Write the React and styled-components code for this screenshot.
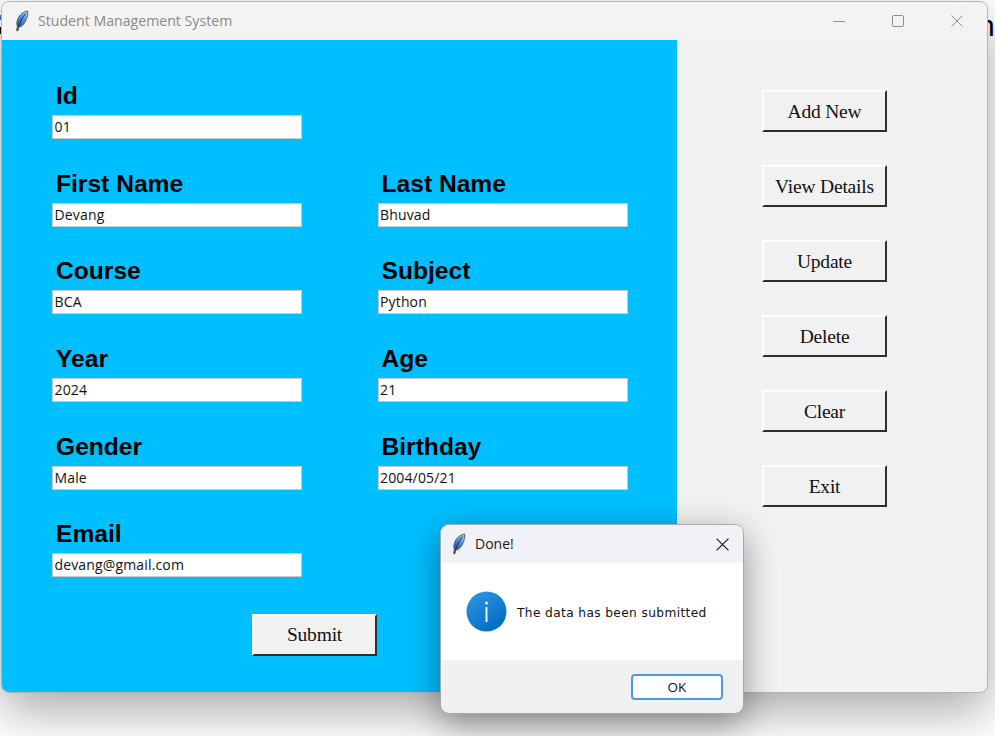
import React from "react";
import styled, { createGlobalStyle } from "styled-components";

const GlobalStyle = createGlobalStyle`
  html, body {
    margin: 0;
    padding: 0;
    background: #ffffff;
  }
`;

const Screen = styled.div`
  position: relative;
  width: 995px;
  height: 736px;
  overflow: hidden;
  padding: 1px 0 0 1px;
  box-sizing: border-box;
  background: #ffffff;
`;

const BehindText = styled.span`
  position: absolute;
  top: 11px;
  left: 978px;
  font-family: "Liberation Sans", sans-serif;
  font-size: 30px;
  line-height: 30px;
  color: #000;
`;

const EdgeSliver = styled.i`
  position: absolute;
  left: 0;
  top: ${({ $top }) => $top}px;
  width: 1px;
  height: ${({ $height }) => $height}px;
  background: ${({ $color }) => $color};
`;

const Window = styled.div`
  position: relative;
  width: 987px;
  height: 692px;
  box-sizing: border-box;
  border: 1px solid #b4b4b4;
  border-radius: 8px;
  background: #f2f2f2;
  box-shadow: 0 18px 50px rgba(0, 0, 0, 0.34);
  display: flex;
  flex-direction: column;
  overflow: hidden;
`;

const TitleBar = styled.div`
  height: 38px;
  flex: none;
  display: flex;
  align-items: center;
  padding: 0 1px 0 12px;
  background: #f3f3f3;
`;

const Title = styled.span`
  margin: 0 0 2px 8px;
  font-family: "Open Sans", "Noto Sans", sans-serif;
  font-size: 14.15px;
  color: #8a8a8a;
  flex: 1;
`;

const WindowControl = styled.div`
  width: 59px;
  height: 38px;
  display: flex;
  align-items: center;
  justify-content: center;
`;

const Content = styled.div`
  flex: 1;
  display: flex;
  min-height: 0;
`;

const FormPanel = styled.div`
  width: 675px;
  flex: none;
  box-sizing: border-box;
  padding: 43px 0 0 50px;
  background: #00bfff;
`;

const FieldGrid = styled.div`
  display: grid;
  grid-template-columns: 325.5px 325px;
  grid-auto-rows: 87.65px;
`;

const Field = styled.div`
  display: flex;
  flex-direction: column;
  align-items: flex-start;
  grid-column: ${({ $wide }) => ($wide ? "1 / span 2" : "auto")};
`;

const FieldLabel = styled.label`
  height: 32px;
  margin-left: 4px;
  font-family: "Liberation Sans", Arial, sans-serif;
  font-size: 24.6px;
  font-weight: 700;
  line-height: 26.5px;
  color: #000;
`;

const FieldInput = styled.input`
  width: 250px;
  height: 24px;
  box-sizing: border-box;
  padding: 0 2px 1px 1.5px;
  border: 1px solid #c9c9c9;
  outline: none;
  background: #fff;
  font-family: "Open Sans", "Noto Sans", sans-serif;
  font-size: 14px;
  letter-spacing: 0.15px;
  color: #111;
`;

const SubmitRow = styled.div`
  margin: 5px 0 0 200px;
`;

const TkButton = styled.button`
  display: block;
  width: 125px;
  height: 42px;
  box-sizing: border-box;
  padding: 1px 0 0;
  border-style: solid;
  border-width: 2px;
  border-color: #fdfdfd #2e2e2e #2e2e2e #fdfdfd;
  background: #f1f1f1;
  font-family: "Liberation Serif", "Times New Roman", serif;
  font-size: 19.5px;
  letter-spacing: -0.2px;
  color: #111;
`;

const ActionColumn = styled.div`
  display: flex;
  flex-direction: column;
  gap: 33px;
  padding: 50px 0 0 85px;
`;

const Dialog = styled.div`
  position: absolute;
  left: 440px;
  top: 524px;
  width: 304px;
  height: 190px;
  box-sizing: border-box;
  border: 1px solid #a8a8a8;
  border-radius: 9px;
  overflow: hidden;
  display: flex;
  flex-direction: column;
  background: #f0f0f0;
  box-shadow: 0 10px 36px rgba(0, 0, 0, 0.4);
`;

const DialogHeader = styled.div`
  height: 38px;
  flex: none;
  display: flex;
  align-items: center;
  padding-left: 10px;
  background: #f1f2f7;
`;

const DialogTitle = styled.span`
  flex: 1;
  margin: 0 0 1px 8px;
  font-family: "Open Sans", "Noto Sans", sans-serif;
  font-size: 14px;
  color: #1a1a1a;
`;

const DialogClose = styled.div`
  width: 42px;
  display: flex;
  justify-content: center;
`;

const DialogBody = styled.div`
  height: 97px;
  flex: none;
  display: flex;
  align-items: center;
  padding-left: 25px;
  gap: 10px;
  background: #fff;
`;

const InfoBadge = styled.svg`
  width: 41px;
  height: 41px;
  flex: none;
`;

const DialogMessage = styled.span`
  margin-top: 3px;
  font-family: "DejaVu Sans", sans-serif;
  font-size: 12.2px;
  letter-spacing: 0.38px;
  color: #111;
`;

const DialogFooter = styled.div`
  flex: 1;
  display: flex;
  justify-content: flex-end;
  align-items: flex-start;
  padding: 14px 20px 0 0;
`;

const OkButton = styled.button`
  width: 92px;
  height: 26px;
  box-sizing: border-box;
  padding: 0;
  border: 2px solid #4a9be0;
  border-radius: 4px;
  background: #fdfdfd;
  font-family: "Open Sans", "Noto Sans", sans-serif;
  font-size: 13.5px;
  color: #111;
`;

const Feather = ({ id }) => (
  <svg width="16" height="22" viewBox="0 0 16 22">
    <defs>
      <linearGradient id={id} x1="0.8" y1="0" x2="0.2" y2="1">
        <stop offset="0" stopColor="#a9cbee" />
        <stop offset="0.5" stopColor="#3f82d6" />
        <stop offset="1" stopColor="#2f4a70" />
      </linearGradient>
    </defs>
    <path
      d="M13.6 1C9.5 1.6 5.2 5 3.6 9.5 2.6 12.3 2.6 14.6 3.4 16.2L2.6 20.6 3.9 20.8 4.8 17C7.4 17 10 14.4 11.6 11 13.2 7.6 14.4 3.6 13.6 1Z"
      fill={`url(#${id})`}
      stroke="#4a5460"
      strokeWidth="0.9"
    />
    <path d="M11.5 3.6C8.6 7.4 6 12 4.5 17" fill="none" stroke="#1c2430" strokeWidth="0.9" />
  </svg>
);

const MinimizeIcon = () => (
  <svg width="12" height="12" viewBox="0 0 12 12">
    <path d="M0 6.5H12" stroke="#8f8f8f" strokeWidth="1" />
  </svg>
);

const MaximizeIcon = () => (
  <svg width="12" height="12" viewBox="0 0 12 12">
    <rect x="0.5" y="0.5" width="11" height="11" rx="1.5" fill="none" stroke="#8f8f8f" />
  </svg>
);

const CloseIcon = ({ color, size }) => (
  <svg width={size} height={size} viewBox="0 0 12 12">
    <path d="M0.5 0.5L11.5 11.5M11.5 0.5L0.5 11.5" stroke={color} strokeWidth="1" fill="none" />
  </svg>
);

const fields = [
  { label: "Id", value: "01", wide: true },
  { label: "First Name", value: "Devang" },
  { label: "Last Name", value: "Bhuvad" },
  { label: "Course", value: "BCA" },
  { label: "Subject", value: "Python" },
  { label: "Year", value: "2024" },
  { label: "Age", value: "21" },
  { label: "Gender", value: "Male" },
  { label: "Birthday", value: "2004/05/21" },
  { label: "Email", value: "devang@gmail.com", wide: true },
];

const actions = ["Add New", "View Details", "Update", "Delete", "Clear", "Exit"];

export default function App() {
  return (
    <Screen>
      <GlobalStyle />
      <BehindText>n</BehindText>
      <EdgeSliver $top={15} $height={5} $color="#2a6fd0" />
      <EdgeSliver $top={27} $height={7} $color="#000" />
      <Window>
        <TitleBar>
          <Feather id="feather-main" />
          <Title>Student Management System</Title>
          <WindowControl><MinimizeIcon /></WindowControl>
          <WindowControl><MaximizeIcon /></WindowControl>
          <WindowControl><CloseIcon color="#8f8f8f" size={12} /></WindowControl>
        </TitleBar>
        <Content>
          <FormPanel>
            <FieldGrid>
              {fields.map((f) => (
                <Field key={f.label} $wide={f.wide}>
                  <FieldLabel>{f.label}</FieldLabel>
                  <FieldInput defaultValue={f.value} />
                </Field>
              ))}
            </FieldGrid>
            <SubmitRow>
              <TkButton>Submit</TkButton>
            </SubmitRow>
          </FormPanel>
          <ActionColumn>
            {actions.map((a) => (
              <TkButton key={a}>{a}</TkButton>
            ))}
          </ActionColumn>
        </Content>
      </Window>
      <Dialog>
        <DialogHeader>
          <Feather id="feather-dialog" />
          <DialogTitle>Done!</DialogTitle>
          <DialogClose><CloseIcon color="#111" size={13} /></DialogClose>
        </DialogHeader>
        <DialogBody>
          <InfoBadge viewBox="0 0 41 41">
            <defs>
              <linearGradient id="info-fill" x1="0.2" y1="0" x2="0.8" y2="1">
                <stop offset="0" stopColor="#2b96e2" />
                <stop offset="1" stopColor="#0069c2" />
              </linearGradient>
            </defs>
            <circle cx="20.5" cy="20.5" r="20" fill="url(#info-fill)" />
            <circle cx="20.5" cy="12" r="1.5" fill="#fff" />
            <rect x="19.5" y="16" width="2" height="15" fill="#e4f1fb" />
          </InfoBadge>
          <DialogMessage>The data has been submitted</DialogMessage>
        </DialogBody>
        <DialogFooter>
          <OkButton>OK</OkButton>
        </DialogFooter>
      </Dialog>
    </Screen>
  );
}
